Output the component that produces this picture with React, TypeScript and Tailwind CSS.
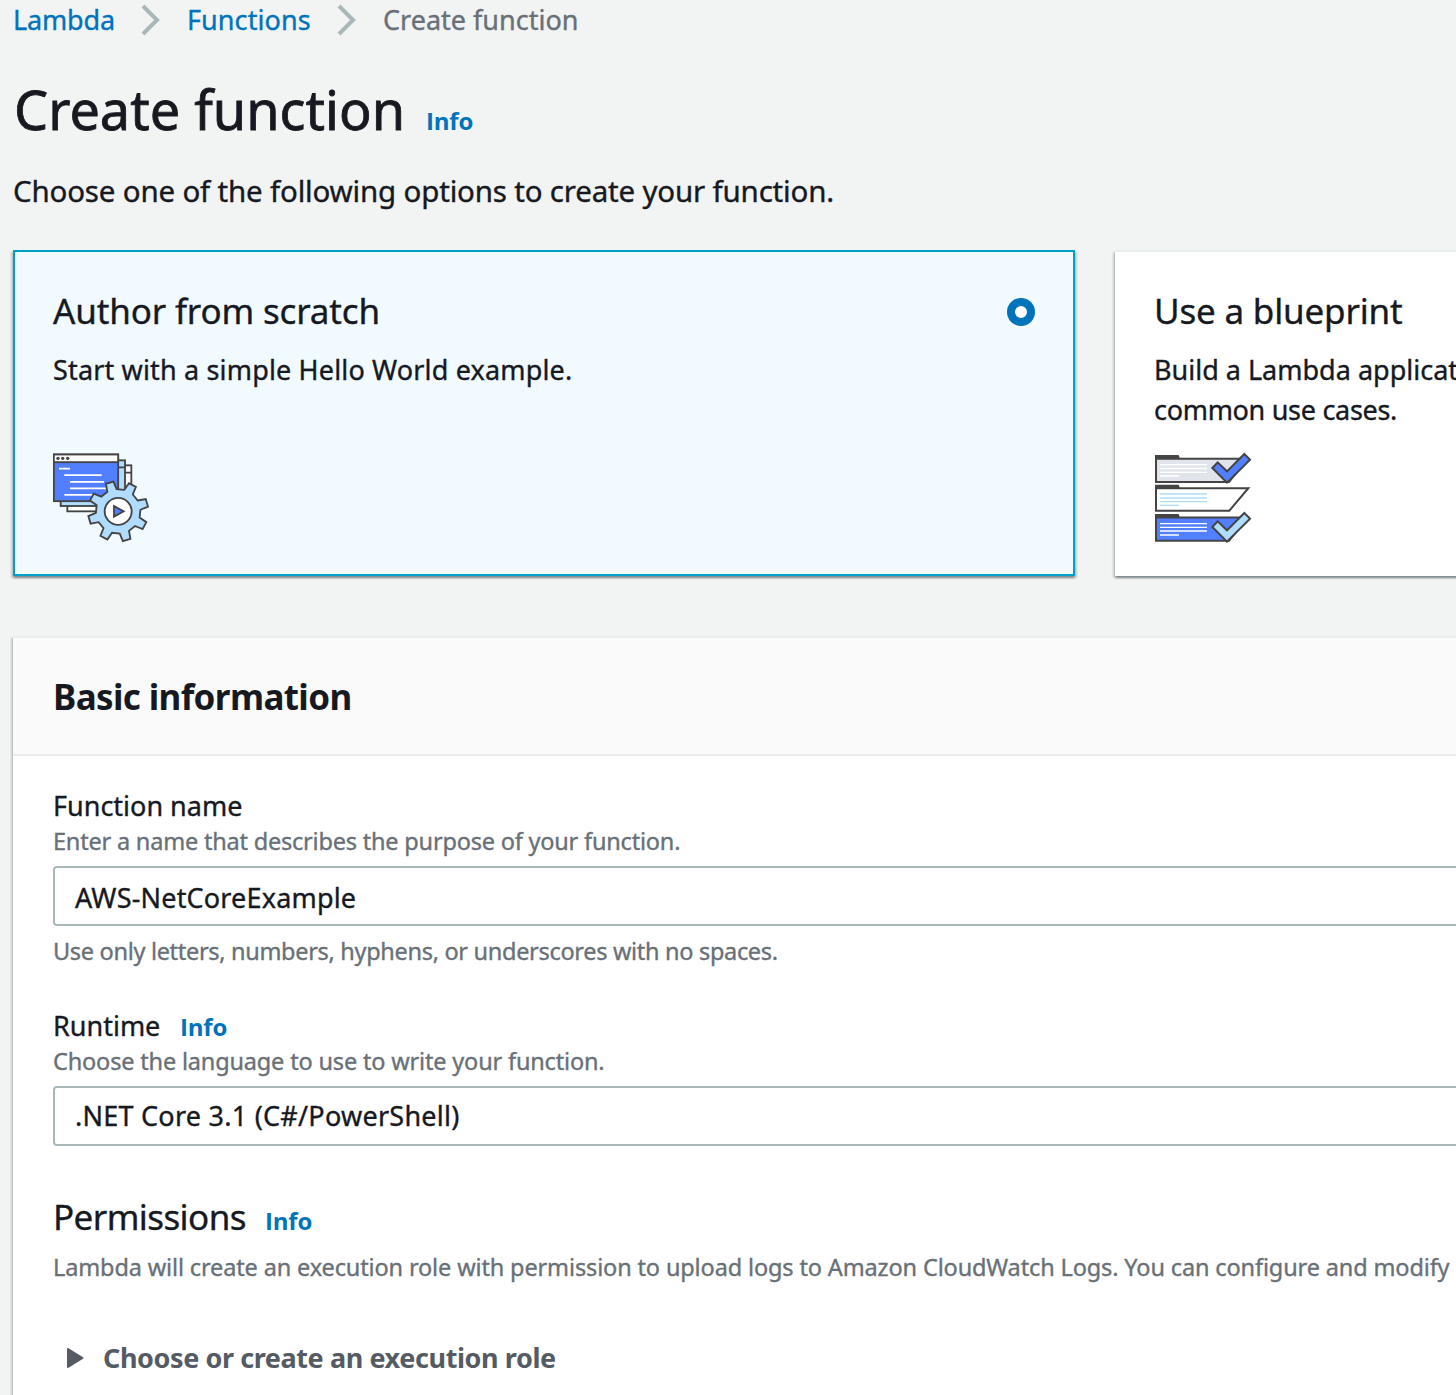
import type { ReactNode } from "react";

const INK = "#444444";
const BLUE = "#527fff";
const SKY = "#b0dcff";

function gearPoints(cx: number, cy: number) {
  const pts: string[] = [];
  const add = (deg: number, r: number) => {
    const a = (deg * Math.PI) / 180;
    pts.push(`${(cx + r * Math.cos(a)).toFixed(1)},${(cy + r * Math.sin(a)).toFixed(1)}`);
  };
  for (let i = 0; i < 8; i++) {
    const c = -16.5 + i * 45;
    add(c - 12.5, 67);
    add(c - 7.5, 90.5);
    add(c + 7.5, 90.5);
    add(c + 12.5, 67);
  }
  return pts.join(" ");
}

function ScratchIcon() {
  return (
    <svg viewBox="39 30 300 288" className="h-24 w-[100px]" stroke={INK} strokeWidth="5.500">
      <rect x="82" y="76" width="192" height="138" fill="#fff" />
      <path d="M82 98H274" />
      <rect x="62" y="61" width="193" height="137" fill={SKY} />
      <path d="M62 82H255" />
      <rect x="41.500" y="43.500" width="193" height="140" fill={BLUE} />
      <rect x="41.500" y="43.500" width="193" height="23" fill="#fff" />
      <g fill={INK} stroke="none">
        <circle cx="54" cy="55" r="5" />
        <circle cx="68" cy="55" r="5" />
        <circle cx="83" cy="55" r="5" />
      </g>
      <path d="M57 86H90M73 105.500H185M90 125.500H192M90 145H200M73 164.500H165" stroke="#fff" />
      <polygon points={gearPoints(234.5, 214)} fill={SKY} />
      <circle cx="234.500" cy="214" r="40.500" fill="#fff" />
      <path d="M222 198V230L251 214Z" fill={BLUE} />
    </svg>
  );
}

function BlueprintIcon() {
  return (
    <svg viewBox="45 30 300 288" className="h-24 w-[100px]" stroke={INK} strokeWidth="6">
      <path d="M48 56H323L267 126H48Z" fill="#e1e4ea" />
      <path d="M48 144.500H325L268 212H48Z" fill="#fff" />
      <path d="M48 232.500H323L267 302H48Z" fill={BLUE} />
      <g fill={INK} stroke="none">
        <path d="M45 45H116L120 56H45Z" />
        <path d="M45 134.500H116L120 145H45Z" />
        <path d="M45 222H116L120 233H45Z" />
      </g>
      <g strokeWidth="4">
        <path d="M60 74H201M60 85.500H201M60 97H201M60 108H117" stroke="#fff" />
        <path d="M60 162H201M60 174H201M60 185H201M60 196H117" stroke={SKY} />
        <path d="M60 251H201M60 262H201M60 273H201M60 285H117" stroke="#fff" />
      </g>
      <path d="M217 84L233 67L261 94L313 42L330 59L261 128Z" fill={BLUE} />
      <path d="M217 261L233 244L261 271L313 219L330 236L261 305Z" fill={SKY} />
    </svg>
  );
}

function Chevron() {
  return (
    <svg viewBox="0 0 20 32" className="h-8 w-5" fill="none" stroke="#aab7b8" strokeWidth="4">
      <path d="M3 2L17 16L3 30" />
    </svg>
  );
}

function Info({ className = "" }: { className?: string }) {
  return (
    <a className={`font-['Open_Sans',sans-serif] text-[24px] font-bold tracking-[-0.2px] text-[#0073bb] [-webkit-text-stroke:0px] ${className}`}>
      Info
    </a>
  );
}

function Hint({ children, className = "" }: { children: ReactNode; className?: string }) {
  return (
    <p className={`h-8 text-[23.5px] leading-8 whitespace-nowrap text-[#687078] ${className}`}>{children}</p>
  );
}

const SHADOW =
  "shadow-[0_2px_2px_0_rgba(0,28,36,0.3),2px_2px_2px_0_rgba(0,28,36,0.15),-2px_2px_2px_0_rgba(0,28,36,0.15)]";

export default function App() {
  return (
    <div className="h-[1395px] w-[1456px] overflow-hidden bg-[#f2f3f3] pl-[13px] font-['Noto_Sans',sans-serif] text-[27px] text-[#16191f] [-webkit-text-stroke:0.35px]">
      <nav className="flex h-10 items-center leading-10 text-[#0073bb]">
        <a className="w-[127px] tracking-[-0.15px]">Lambda</a>
        <Chevron />
        <a className="ml-[27px] w-[149px] tracking-[0.08px]">Functions</a>
        <Chevron />
        <span className="ml-[27px] whitespace-nowrap text-[#687078]">Create function</span>
      </nav>

      <div className="mt-[33px] flex h-[72px] items-baseline leading-[72px] whitespace-nowrap">
        <h1 className="w-[413px] pl-px text-[54px] tracking-[0.02px] [-webkit-text-stroke:0.8px]">Create function</h1>
        <Info />
      </div>
      <p className="mt-[26px] text-[29.5px] leading-10 tracking-[-0.18px]">
        Choose one of the following options to create your function.
      </p>

      <div className="mt-[39px] flex h-[326px] gap-10">
        <section className={`w-[1062px] shrink-0 border-2 border-[#00a1c9] bg-[#f1faff] px-[38px] pt-[37px] ${SHADOW}`}>
          <div className="flex items-start justify-between">
            <h2 className="text-[35px] leading-[44px] tracking-[-0.15px]">Author from scratch</h2>
            <span className="mt-[9px] size-7 rounded-full border-8 border-[#0073bb] bg-white" />
          </div>
          <p className="mt-[17px] mb-5 h-20 leading-10 tracking-[0.16px]">Start with a simple Hello World example.</p>
          <ScratchIcon />
        </section>
        <section className={`w-[1062px] shrink-0 border-t-2 border-[#eaeded] bg-white px-10 pt-[37px] ${SHADOW}`}>
          <h2 className="-ml-px text-[35px] leading-[44px] tracking-[-0.18px]">Use a blueprint</h2>
          <p className="mt-[17px] mb-5 -ml-px h-20 leading-10 whitespace-nowrap">
            <span className="block">Build a Lambda applicat</span>
            <span className="block tracking-[-0.3px]">common use cases.</span>
          </p>
          <BlueprintIcon />
        </section>
      </div>

      <section className={`mt-[60px] h-[900px] w-[2164px] border-t-2 border-[#eaeded] bg-white ${SHADOW}`}>
        <header className="h-[118px] border-b-2 border-[#eaeded] bg-[#fafafa] px-10 pt-[37px]">
          <h2 className="text-[35px] leading-[44px] font-bold tracking-[-0.62px] [-webkit-text-stroke:0px]">
            Basic information
          </h2>
        </header>
        <div className="px-10 pt-8">
          <label className="block h-9 leading-9">Function name</label>
          <Hint className="mt-px tracking-[-0.2px]">Enter a name that describes the purpose of your function.</Hint>
          <div className="mt-[9px] h-[60px] rounded-[4px] border-2 border-[#aab7b8] px-5 leading-[60px] tracking-[0.18px]">
            AWS-NetCoreExample
          </div>
          <Hint className="mt-[9px] tracking-[-0.31px]">
            Use only letters, numbers, hyphens, or underscores with no spaces.
          </Hint>

          <div className="mt-[41px] flex h-9 items-baseline leading-9">
            <label className="w-[127px]">Runtime</label>
            <Info />
          </div>
          <Hint className="mt-px tracking-[-0.17px]">Choose the language to use to write your function.</Hint>
          <div className="mt-[9px] h-[60px] rounded-[4px] border-2 border-[#aab7b8] px-5 leading-[56px] tracking-[0.25px]">
            .NET Core 3.1 (C#/PowerShell)
          </div>

          <div className="mt-[49px] flex h-11 items-baseline leading-[44px]">
            <h3 className="w-[212px] text-[35px] tracking-[-0.58px]">Permissions</h3>
            <Info />
          </div>
          <Hint className="mt-3 tracking-[-0.135px]">
            Lambda will create an execution role with permission to upload logs to Amazon CloudWatch Logs. You can
            configure and modify
          </Hint>

          <div className="mt-[55px] flex h-10 items-center pl-[14px] leading-10 font-bold text-[#545b64] [-webkit-text-stroke:0px]">
            <svg viewBox="0 0 18 22" className="h-[22px] w-[18px]" fill="#545b64" stroke="#545b64" strokeWidth="2" strokeLinejoin="round">
              <path d="M1 2V20L15.500 11Z" />
            </svg>
            <span className="ml-[18px] tracking-[-0.41px]">Choose or create an execution role</span>
          </div>
        </div>
      </section>
    </div>
  );
}
